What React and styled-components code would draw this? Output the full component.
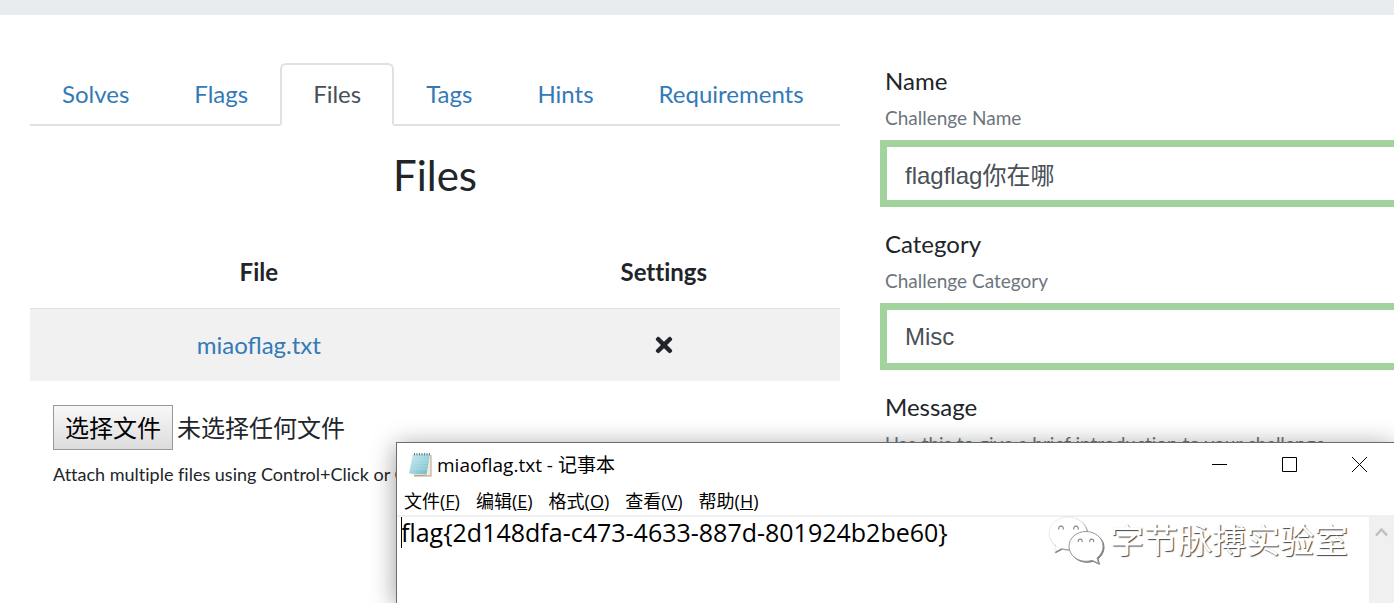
import React from "react";
import styled, { createGlobalStyle, css } from "styled-components";
import { FaTimes } from "react-icons/fa";

const GlobalStyle = createGlobalStyle`
  *, *::before, *::after { box-sizing: border-box; }
  body {
    margin: 0;
    background: #fff;
    color: #212529;
    font-family: Lato, "Noto Sans CJK SC", sans-serif;
    font-size: 24px;
    line-height: 36px;
  }
`;

const Page = styled.div`
  position: relative;
  min-height: 100vh;
  overflow: hidden;
`;

const TopBand = styled.div`
  height: 15px;
  background: #e9ecef;
`;

const Columns = styled.main`
  display: grid;
  grid-template-columns: minmax(0, 810fr) minmax(0, 514fr);
  column-gap: 40px;
  padding: 48px 0 0 30px;
`;

const Tabs = styled.nav`
  display: flex;
  border-bottom: 2px solid #dee2e6;
`;

const Tab = styled.a`
  margin: 0 0 -2px -1px;
  padding: 11px 31px 12px;
  border: 2px solid transparent;
  border-radius: 6px 6px 0 0;
  color: #337ab7;
  text-decoration: none;
  ${(p) =>
    p.$active &&
    css`
      color: #495057;
      background: #fff;
      border-color: #dee2e6 #dee2e6 #fff;
    `}
`;

const Heading = styled.h2`
  margin: 24px 0 36px;
  font-size: 42px;
  font-weight: 400;
  line-height: 50px;
  text-align: center;
`;

const FileTable = styled.table`
  width: 100%;
  table-layout: fixed;
  border-collapse: collapse;
  text-align: center;
`;

const HeadCell = styled.th`
  width: ${(p) => p.$width};
  padding: 18px;
  font-weight: 700;
  font-variant-ligatures: none;
`;

const Cell = styled.td`
  padding: 18px;
  border-top: 1px solid #dee2e6;
  background: #f1f1f1;
`;

const FileLink = styled.a`
  color: #337ab7;
  text-decoration: none;
`;

const DeleteButton = styled.button`
  display: inline-flex;
  align-items: center;
  height: 36px;
  padding: 0;
  border: 0;
  background: none;
  color: inherit;
  font-size: 24px;
  vertical-align: top;
`;

const Upload = styled.div`
  padding: 24px 23px 0;
`;

const HiddenFile = styled.input`
  position: absolute;
  width: 1px;
  height: 1px;
  opacity: 0;
`;

const Picker = styled.label`
  display: flex;
  align-items: center;
  gap: 4px;
`;

const PickerButton = styled.span`
  padding: 4px 11px;
  border: 1px solid #999;
  background: linear-gradient(#f8f8f8, #dcdcdc);
  color: #000;
  line-height: 35px;
`;

const UploadHint = styled.p`
  margin: 10px 0 0;
  font-size: 18px;
  font-variant-ligatures: none;
  line-height: 28px;
`;

const Field = styled.div`
  display: flex;
  flex-direction: column;
  margin-bottom: 19px;
`;

const FieldLabel = styled.label`
  padding-left: 5px;
`;

const FieldHelp = styled.small`
  margin: 5px 0 8px;
  padding-left: 5px;
  color: #6c757d;
  font-size: 19px;
  font-variant-ligatures: none;
  line-height: 28px;
`;

const FieldInput = styled.input`
  width: 100%;
  height: 67px;
  padding: 0 18px;
  border: 7px solid #a3d39c;
  border-right: 0;
  border-radius: 0;
  outline: 0;
  background: #fff;
  color: #495057;
  font-family: "Liberation Sans", "Noto Sans CJK SC", sans-serif;
  font-size: 24px;
`;

const Notepad = styled.section`
  position: absolute;
  top: 442px;
  right: 0;
  bottom: 0;
  left: 396px;
  display: flex;
  flex-direction: column;
  border: 1px solid #6b6b6b;
  border-width: 1px 0 0 1px;
  background: #fff;
  box-shadow: 0 4px 24px rgba(0, 0, 0, 0.4);
  color: #000;
  font-family: "Open Sans", "Noto Sans CJK SC", sans-serif;
  font-size: 18px;
`;

const TitleBar = styled.header`
  display: flex;
  align-items: center;
  height: 43px;
  padding-left: 11px;
`;

const Title = styled.h1`
  flex: 1;
  margin: 0 0 0 4px;
  font-size: 19px;
  font-weight: 400;
`;

const WindowButton = styled.button`
  display: flex;
  align-items: center;
  justify-content: center;
  width: 70px;
  height: 43px;
  padding: 0;
  border: 0;
  background: none;
`;

const MenuBar = styled.nav`
  display: flex;
  gap: 16px;
  padding: 1px 0 0 7px;
  border-bottom: 2px solid #f0f0f0;
`;

const MenuButton = styled.button`
  padding: 0;
  border: 0;
  background: none;
  color: inherit;
  font: inherit;
  line-height: 28px;
`;

const Editor = styled.div`
  display: flex;
  flex: 1;
`;

const TextArea = styled.textarea`
  flex: 1;
  padding: 0 0 0 4px;
  border: 0;
  outline: 0;
  resize: none;
  overflow: hidden;
  background: linear-gradient(#000, #000) 4px 0 / 1px 31px no-repeat;
  color: #000;
  font-family: "Open Sans", sans-serif;
  font-size: 25px;
  line-height: 31px;
`;

const ScrollTrack = styled.div`
  width: 25px;
  padding: 10px 6px;
  background: #f0f0f0;
  line-height: 0;
`;

const Watermark = styled.div`
  position: absolute;
  right: 46px;
  bottom: 39px;
  display: flex;
  align-items: center;
  gap: 6px;
  color: #fff;
  font-size: 34px;
  line-height: 48px;
  text-shadow: 1px 1px 1px #444;
`;

const tabs = ["Solves", "Flags", "Files", "Tags", "Hints", "Requirements"];

const menus = [
  ["文件", "F"],
  ["编辑", "E"],
  ["格式", "O"],
  ["查看", "V"],
  ["帮助", "H"],
];

function NotepadIcon() {
  return (
    <svg width="25" height="26" viewBox="0 0 25 26" aria-hidden="true">
      <defs>
        <linearGradient id="cover" x1="0" y1="0" x2="1" y2="1">
          <stop offset="0" stopColor="#d3edf1" />
          <stop offset="0.55" stopColor="#9ad2dd" />
          <stop offset="1" stopColor="#6db4c6" />
        </linearGradient>
      </defs>
      <path d="M8 4 23.500 3V24.500H6Z" fill="#b5a384" />
      <path d="M6 3 22.500 2.500V23.500L3 22.500Z" fill="#f1ecdf" />
      <path d="M5 2H22L18.500 22.500 1 21.500Z" fill="url(#cover)" />
      <path d="M5 8H20M4.500 11H19.500M4 14H19M3.500 17H18.500" stroke="#b4e0e7" strokeWidth=".7" />
      <path
        d="M6.500 1v2.500M9 1v2.500M11.500 1v2.500M14 1v2.500M16.500 1v2.500M19 1v2.500M21.500 1v2.500"
        stroke="#6f7f84"
        strokeWidth="1"
      />
    </svg>
  );
}

const ChatSvg = styled.svg`
  overflow: visible;
  filter: drop-shadow(1px 1px 0 #777);
`;

function ChatIcon() {
  return (
    <ChatSvg width="56" height="48" viewBox="0 0 56 48" aria-hidden="true">
      <g fill="#fff" stroke="#ddd" strokeWidth=".6">
        <path d="M20 1C9.500 1 1 8.200 1 17.200c0 5 2.700 9.500 7 12.500L6.500 36l7-3.800c2 .6 4.200 1 6.500 1 10.500 0 19-7.200 19-16S30.500 1 20 1Z" />
        <path
          d="M38 15.500c-9.300 0-17 6.500-17 14.800s7.700 15 17 15c2.200 0 4.200-.4 6-1l6.500 3-1.500-5.500c3.700-2.800 6-6.900 6-11.500 0-8.300-7.700-14.800-17-14.800Z"
          stroke="#999"
          strokeWidth="1"
        />
      </g>
      <g fill="none" stroke="#888" strokeWidth="1.200">
        <path d="M11 13.500a2.300 2.300 0 1 1 4 0M26 13.500a2.300 2.300 0 1 1 4 0" />
        <path d="M30.500 26a2 2 0 1 1 3.500 0M42 26a2 2 0 1 1 3.500 0" />
      </g>
    </ChatSvg>
  );
}

function FormField({ id, label, help, value }) {
  return (
    <Field>
      <FieldLabel htmlFor={id}>{label}</FieldLabel>
      <FieldHelp>{help}</FieldHelp>
      <FieldInput id={id} type="text" defaultValue={value} />
    </Field>
  );
}

export default function App() {
  return (
    <Page>
      <GlobalStyle />
      <TopBand />
      <Columns>
        <section>
          <Tabs>
            {tabs.map((name) => (
              <Tab key={name} href={`#${name.toLowerCase()}`} $active={name === "Files"}>
                {name}
              </Tab>
            ))}
          </Tabs>
          <Heading>Files</Heading>
          <FileTable>
            <thead>
              <tr>
                <HeadCell $width="56.5%">File</HeadCell>
                <HeadCell $width="43.5%">Settings</HeadCell>
              </tr>
            </thead>
            <tbody>
              <tr>
                <Cell>
                  <FileLink href="#miaoflag">miaoflag.txt</FileLink>
                </Cell>
                <Cell>
                  <DeleteButton type="button" aria-label="Delete file">
                    <FaTimes />
                  </DeleteButton>
                </Cell>
              </tr>
            </tbody>
          </FileTable>
          <Upload>
            <HiddenFile id="upload" type="file" multiple />
            <Picker htmlFor="upload">
              <PickerButton>选择文件</PickerButton>
              <span>未选择任何文件</span>
            </Picker>
            <UploadHint>Attach multiple files using Control+Click or Cmd+Click</UploadHint>
          </Upload>
        </section>
        <section>
          <FormField id="name" label="Name" help="Challenge Name" value="flagflag你在哪" />
          <FormField id="category" label="Category" help="Challenge Category" value="Misc" />
          <FormField
            id="message"
            label="Message"
            help="Use this to give a brief introduction to your challenge."
            value=""
          />
        </section>
      </Columns>

      <Notepad>
        <TitleBar>
          <NotepadIcon />
          <Title>miaoflag.txt - 记事本</Title>
          <WindowButton type="button" aria-label="Minimize">
            <svg width="15" height="15" viewBox="0 0 15 15">
              <path d="M0 7.500H15" stroke="#000" />
            </svg>
          </WindowButton>
          <WindowButton type="button" aria-label="Maximize">
            <svg width="15" height="15" viewBox="0 0 15 15">
              <path d="M.5 .5H14.500V14.500H.5Z" fill="none" stroke="#000" />
            </svg>
          </WindowButton>
          <WindowButton type="button" aria-label="Close">
            <svg width="15" height="15" viewBox="0 0 15 15">
              <path d="M0 0 15 15M15 0 0 15" stroke="#000" />
            </svg>
          </WindowButton>
        </TitleBar>
        <MenuBar>
          {menus.map(([name, key]) => (
            <MenuButton key={key} type="button">
              {name}(<u>{key}</u>)
            </MenuButton>
          ))}
        </MenuBar>
        <Editor>
          <TextArea
            aria-label="Text editor"
            spellCheck={false}
            defaultValue="flag{2d148dfa-c473-4633-887d-801924b2be60}"
          />
          <ScrollTrack>
            <svg width="13" height="10" viewBox="0 0 13 10" aria-hidden="true">
              <path d="M1 8.500 6.500 2.500 12 8.500" fill="none" stroke="#bfbfbf" strokeWidth="2.500" />
            </svg>
          </ScrollTrack>
        </Editor>
        <Watermark>
          <ChatIcon />
          <span>字节脉搏实验室</span>
        </Watermark>
      </Notepad>
    </Page>
  );
}
